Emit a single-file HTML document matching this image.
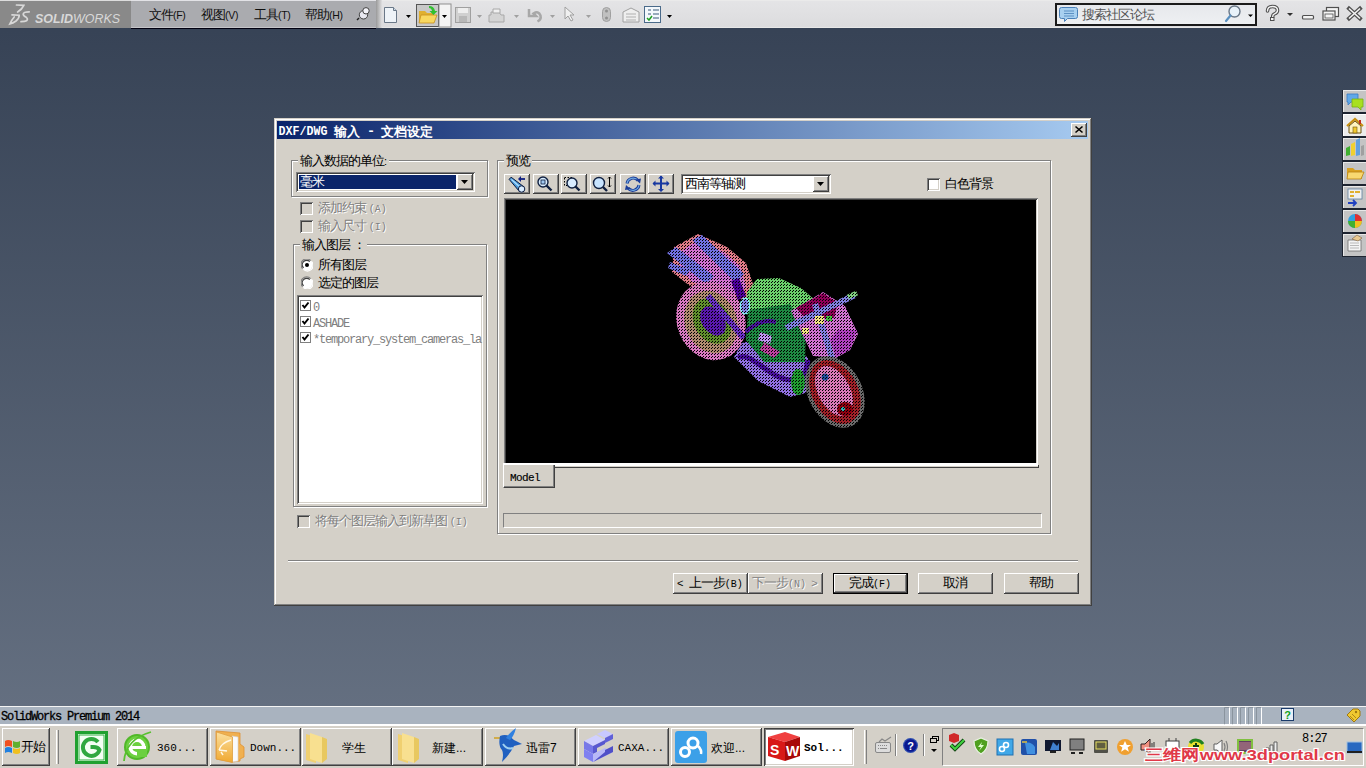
<!DOCTYPE html>
<html><head><meta charset="utf-8">
<style>
*{margin:0;padding:0;box-sizing:border-box}
html,body{width:1366px;height:768px;overflow:hidden}
body{position:relative;font-family:"Liberation Sans",sans-serif;font-size:12px;color:#000;
background:linear-gradient(to bottom,#354154 0px,#687384 768px)}
.a{position:absolute}
.raised{background:#d4d0c8;box-shadow:inset -1px -1px #404040,inset 1px 1px #fff,inset -2px -2px #808080,inset 2px 2px #d4d0c8}
.sunken{box-shadow:inset 1px 1px #808080,inset -1px -1px #fff,inset 2px 2px #404040,inset -2px -2px #d4d0c8}
.eg{border:1px solid #808080}
.ew{border:1px solid #fff}
.t{white-space:nowrap;line-height:13px;font-size:13px;letter-spacing:-1px}
.as{font-size:11px;letter-spacing:0}
.m10{font-family:"Liberation Mono",monospace;font-size:10px;letter-spacing:0}
.dis{color:#808080;text-shadow:1px 1px #fff}
.mono{font-family:"Liberation Mono",monospace}
</style></head><body>

<!-- ===== top bar ===== -->
<div class="a" style="left:0;top:0;width:1366px;height:28px;background:linear-gradient(to bottom,#e4e4e6,#dcdcde);border-top:1px solid #eaeaea;border-bottom:1px solid #e8e8e8"></div>
<div class="a" style="left:0;top:0;width:131px;height:28px;background:#898989;border-top:1px solid #dcdcdc"></div>
<div class="a" style="left:131px;top:0;width:245px;height:29px;background:#aaabaf;border-top:1px solid #e2e2e6;border-bottom:1px solid #000010;box-shadow:inset 0 -1px #c4c4c8"></div>
<div class="a" style="left:376px;top:0;width:6px;height:28px;background:linear-gradient(to right,#9a9a9a,#dfdfe1)"></div>
<svg class="a" style="left:0;top:0" width="131" height="28">
 <g fill="none" stroke="#d8d8d8" stroke-width="1.7" stroke-linecap="round">
  <path d="M16.5 5 L23.8 5.4 Q22 9.5 17.6 12"/>
  <path d="M12 14.8 L19.2 15.2 Q19.5 18 16 21 Q13 23.3 9.8 24 Q12 19.5 14.2 17"/>
  <path d="M29.2 11.8 Q23.5 11.8 23.2 14 Q23.2 16 26.3 17.3 Q28.4 19 26.5 20.8 Q25 21.7 21 21.7"/>
 </g>
 <text x="35" y="22.5" font-family="Liberation Sans" font-size="12.5" font-style="italic" fill="#d8d8d8" textLength="85" lengthAdjust="spacingAndGlyphs"><tspan font-weight="bold">SOLID</tspan>WORKS</text>
</svg>
<div class="a t" style="left:149px;top:8px;color:#101010">文件<span style="font-size:10.5px;letter-spacing:-0.3px">(F)</span></div>
<div class="a t" style="left:201px;top:8px;color:#101010">视图<span style="font-size:10.5px;letter-spacing:-0.3px">(V)</span></div>
<div class="a t" style="left:254px;top:8px;color:#101010">工具<span style="font-size:10.5px;letter-spacing:-0.3px">(T)</span></div>
<div class="a t" style="left:305px;top:8px;color:#101010">帮助<span style="font-size:10.5px;letter-spacing:-0.3px">(H)</span></div>
<svg class="a" style="left:352px;top:3px" width="22" height="22">
 <path d="M7 15 L5 17" stroke="#202020" stroke-width="1.4"/>
 <circle cx="11.5" cy="11.8" r="4.2" fill="#e8e8f0" stroke="#404040" stroke-width="1"/>
 <circle cx="14" cy="7.8" r="3.2" fill="#f4f4fa" stroke="#404040" stroke-width="1"/>
</svg>

<!-- toolbar icons -->
<svg class="a" style="left:377px;top:0" width="300" height="28">
 <!-- new -->
 <path d="M7.5 7.5h9l3 3v12h-12z" fill="#eef3f8" stroke="#6a7888"/>
 <path d="M16.5 7.5v3h3" fill="#d0dce8" stroke="#6a7888"/>
 <path d="M29 15h5l-2.5 3z" fill="#000"/>
 <!-- open pressed -->
 <rect x="39.5" y="4.5" width="22" height="22" fill="#c8c8c8" stroke="#555"/>
 <rect x="62" y="4" width="12" height="23" fill="#f4f4f4" stroke="#909090"/>
 <path d="M65 15h5l-2.5 3z" fill="#000"/>
 <path d="M42 11h6l2 2h7v10h-15z" fill="#e0b030"/>
 <path d="M44 15h16l-3 8h-15z" fill="#f8d860" stroke="#c89020" stroke-width=".8"/>
 <path d="M52 6 q5 0 6 5 h2.5l-4 4-4-4h2.5q-.5-3-3-3z" fill="#30c030"/>
 <!-- save disabled -->
 <rect x="78.5" y="7.5" width="15" height="15" fill="#d0d0d0" stroke="#a0a0a0"/>
 <rect x="81" y="8" width="10" height="5" fill="#eeeeee"/>
 <rect x="82" y="16" width="8" height="6" fill="#b8b8b8"/>
 <path d="M100 15h5l-2.5 3z" fill="#a0a0a0"/>
 <!-- print disabled -->
 <path d="M114 12h8l2 3h3v7h-15v-7h2z" fill="#d4d4d4" stroke="#a8a8a8"/>
 <path d="M116 9h7v4h-7z" fill="#f0f0f0" stroke="#a8a8a8"/>
 <path d="M137 15h5l-2.5 3z" fill="#a0a0a0"/>
 <!-- undo disabled -->
 <path d="M152 9v7h7l-2.5-2.5q5-3 7 2 q1 4-3 6" fill="none" stroke="#a8a8a8" stroke-width="2.5"/>
 <path d="M173 15h5l-2.5 3z" fill="#a0a0a0"/>
 <!-- select -->
 <path d="M188 7v12l3-3 3 5 2-1-3-5h4z" fill="#f0f0f0" stroke="#a0a0a0"/>
 <path d="M209 15h5l-2.5 3z" fill="#a0a0a0"/>
 <!-- slider -->
 <rect x="225.5" y="7.5" width="8" height="14" rx="4" fill="#c0c0c0" stroke="#a0a0a0"/>
 <circle cx="229.5" cy="11" r="1.5" fill="#909090"/><circle cx="229.5" cy="18" r="1.5" fill="#909090"/>
 <!-- options -->
 <path d="M246 12l8-4 8 4v10h-16z" fill="#eeeeee" stroke="#a0a0a0"/>
 <path d="M249 14h10M249 17h10M249 20h10" stroke="#b0b0b0"/>
 <!-- checklist -->
 <rect x="267.5" y="6.5" width="16" height="16" fill="#f4f8fc" stroke="#4a6a8a"/>
 <path d="M271 10h3M276 10h6M271 14h3M276 14h6M276 18h6" stroke="#3a5a7a"/>
 <path d="M270 18l2 2 3-4" fill="none" stroke="#20a020" stroke-width="1.5"/>
 <path d="M290 15h5l-2.5 3z" fill="#000"/>
</svg>

<!-- search box -->
<div class="a" style="left:1055px;top:3px;width:202px;height:23px;border:2px solid #1a1a1a;background:linear-gradient(to bottom,#e6e8ec,#eef0f2)"></div>
<svg class="a" style="left:1059px;top:5px" width="20" height="18">
 <path d="M2.5 2.5h14a2 2 0 0 1 2 2v7a2 2 0 0 1-2 2h-8l-3 3v-3h-3a2 2 0 0 1-2-2v-7a2 2 0 0 1 2-2z" fill="#a8d0f0" stroke="#4a80b8"/>
 <path d="M5 6h10M5 8.5h10M5 11h10" stroke="#4a80b8" stroke-width=".8"/>
</svg>
<div class="a t" style="left:1082px;top:8px;color:#505050">搜索社区论坛</div>
<svg class="a" style="left:1222px;top:4px" width="40" height="22">
 <circle cx="12.5" cy="7.5" r="5.5" fill="#e8f2fa" stroke="#6a7888" stroke-width="1.4"/>
 <path d="M8.5 11.5L4 17" stroke="#5a90c0" stroke-width="2.2" stroke-linecap="round"/>
 <path d="M26 10.5h5l-2.5 2.5z" fill="#000"/>
</svg>
<svg class="a" style="left:1262px;top:4px" width="104" height="22">
 <path d="M5.5 7q0-4.5 5-4.5t5 3.8q0 2.6-3 3.6q-1.8.6-1.8 2.8" fill="none" stroke="#505050" stroke-width="3.6" stroke-linecap="round"/>
 <path d="M5.5 7q0-4.5 5-4.5t5 3.8q0 2.6-3 3.6q-1.8.6-1.8 2.8" fill="none" stroke="#f4f4f4" stroke-width="1.4" stroke-linecap="round"/>
 <rect x="8.5" y="13.5" width="3.5" height="3" fill="#f4f4f4" stroke="#505050"/>
 <path d="M25 9h6l-3 3z" fill="#303030"/>
 <rect x="40.5" y="11.5" width="11" height="3.5" rx="1" fill="#f4f4f4" stroke="#505050" stroke-width="1.2"/>
 <rect x="64.5" y="3.5" width="12" height="9" fill="#f4f4f4" stroke="#505050" stroke-width="1.2"/>
 <rect x="61" y="7" width="12" height="9" fill="#f4f4f4" stroke="#505050" stroke-width="1.2"/>
 <rect x="63" y="10" width="8" height="4" fill="none" stroke="#505050" stroke-width=".8"/>
 <path d="M87 4.5l11 10M98 4.5l-11 10" stroke="#505050" stroke-width="3.8" stroke-linecap="square"/>
 <path d="M87 4.5l11 10M98 4.5l-11 10" stroke="#f4f4f4" stroke-width="1.6"/>
</svg>

<!-- ===== side tabs ===== -->
<div class="a" style="left:1342px;top:90px;width:24px;height:167px;background:#1e2430"></div>
<div class="a" style="left:1343px;top:90px;width:23px;height:22px;background:#c4c4c4;border-top:1px solid #e8e8e8;border-left:1px solid #e8e8e8"></div>
<div class="a" style="left:1343px;top:114px;width:23px;height:22px;background:#ececec;border-top:1px solid #fff;border-left:1px solid #fff"></div>
<div class="a" style="left:1343px;top:138px;width:23px;height:22px;background:#c4c4c4;border-top:1px solid #e8e8e8;border-left:1px solid #e8e8e8"></div>
<div class="a" style="left:1343px;top:162px;width:23px;height:22px;background:#c4c4c4;border-top:1px solid #e8e8e8;border-left:1px solid #e8e8e8"></div>
<div class="a" style="left:1343px;top:186px;width:23px;height:22px;background:#c4c4c4;border-top:1px solid #e8e8e8;border-left:1px solid #e8e8e8"></div>
<div class="a" style="left:1343px;top:210px;width:23px;height:22px;background:#c4c4c4;border-top:1px solid #e8e8e8;border-left:1px solid #e8e8e8"></div>
<div class="a" style="left:1343px;top:234px;width:23px;height:22px;background:#c4c4c4;border-top:1px solid #e8e8e8;border-left:1px solid #e8e8e8"></div>
<svg class="a" style="left:1343px;top:90px" width="23" height="167">
 <!-- chat -->
 <path d="M4 4h11v8h-7l-3 3v-3h-1z" fill="#60a8e8" stroke="#3a78c0" stroke-width=".8"/>
 <path d="M9 9h11v8h-2v3l-3-3h-6z" fill="#a8e020" stroke="#78b010" stroke-width=".8"/>
 <!-- house -->
 <path d="M4 36l8-7 8 7" fill="none" stroke="#c89010" stroke-width="2.2"/>
 <path d="M6 36v7h12v-7l-6-5z" fill="#fff4c0" stroke="#6a5010"/>
 <rect x="10" y="37" width="4" height="6" fill="#f0c830" stroke="#6a5010" stroke-width=".6"/>
 <rect x="16" y="30" width="2" height="4" fill="#c03020"/>
 <!-- chart -->
 <path d="M3 58l4-2v9l-4 1z" fill="#40b030"/>
 <path d="M8 54l4-2v13l-4 1z" fill="#f0d030"/>
 <path d="M13 50l4-2v17l-4 1z" fill="#60a0e0"/>
 <path d="M18 56l3-1v10l-3 1z" fill="#a0a0a0"/>
 <!-- folder -->
 <path d="M4 78h6l2 2h7v9h-15z" fill="#d8a020"/>
 <path d="M5 82h16l-3 7h-14z" fill="#f8d870" stroke="#b88010" stroke-width=".8"/>
 <!-- layout -->
 <rect x="5" y="99" width="14" height="10" fill="#f0f0f0" stroke="#6080a0" stroke-width=".8"/>
 <path d="M7 101h4v2h-4zM12 101h5v2h-5zM7 105h4v2h-4z" fill="#e0b030"/>
 <path d="M5 113h8M10 110l3 3-3 3" fill="none" stroke="#2040c0" stroke-width="1.8"/>
 <!-- ball -->
 <circle cx="12" cy="131" r="7" fill="#30a0e0"/>
 <path d="M12 124a7 7 0 0 1 7 7h-7z" fill="#e03030"/>
 <path d="M5 131a7 7 0 0 0 7 7v-7z" fill="#40b030"/>
 <path d="M12 138a7 7 0 0 0 7-7h-7z" fill="#f0c020"/>
 <!-- note -->
 <path d="M5 150h13v11h-13z" fill="#f4f4f4" stroke="#707070" stroke-width=".8"/>
 <path d="M7 153h9M7 155.5h9M7 158h9" stroke="#909090" stroke-width=".6"/>
 <path d="M9 149l5-4 5 3-4 3z" fill="#e8c890" stroke="#806040" stroke-width=".6"/>
</svg>

<!-- ===== dialog ===== -->
<div class="a" style="left:274px;top:118px;width:818px;height:488px;background:#d4d0c8;box-shadow:inset -1px -1px #404040,inset 1px 1px #d4d0c8,inset -2px -2px #808080,inset 2px 2px #fff"></div>
<div class="a" style="left:277px;top:121px;width:811px;height:18px;background:linear-gradient(to right,#0a246a,#a6caf0)"></div>
<svg class="a" style="left:277px;top:121px" width="200" height="18" font-family="Liberation Mono" font-weight="bold" fill="#fff">
 <text x="1.5" y="14" font-size="13.5" textLength="49" lengthAdjust="spacingAndGlyphs">DXF/DWG</text>
 <text x="57" y="14.5" font-size="13" font-family="Liberation Sans" letter-spacing="0">输入</text>
 <text x="90" y="14" font-size="13.5">-</text>
 <text x="104" y="14.5" font-size="13" font-family="Liberation Sans">文档设定</text>
</svg>
<div class="a raised" style="left:1071px;top:123px;width:16px;height:14px"></div>
<svg class="a" style="left:1071px;top:123px" width="16" height="14"><path d="M4.5 3.5L11.5 9.5M11.5 3.5L4.5 9.5" stroke="#000" stroke-width="1.6"/></svg>

<!-- group 1 -->
<div class="a ew" style="left:292px;top:161px;width:197px;height:37px"></div>
<div class="a eg" style="left:291px;top:160px;width:197px;height:37px"></div>
<div class="a t" style="left:298px;top:154px;padding:0 2px;background:#d4d0c8">输入数据的单位<span class="as">:</span></div>
<div class="a sunken" style="left:296px;top:172px;width:179px;height:20px;background:#fff"></div>
<div class="a" style="left:299px;top:175px;width:157px;height:14px;background:#0a246a"></div>
<div class="a t" style="left:300px;top:175px;color:#fff">毫米</div>
<div class="a raised" style="left:457px;top:174px;width:16px;height:16px"></div>
<svg class="a" style="left:457px;top:174px" width="16" height="16"><path d="M4 6h7l-3.5 4z" fill="#000"/></svg>

<!-- checkboxes disabled -->
<div class="a sunken" style="left:300px;top:202px;width:13px;height:13px"></div>
<div class="a t dis" style="left:318px;top:201px">添加约束 <span class="m10">(A)</span></div>
<div class="a sunken" style="left:300px;top:220px;width:13px;height:13px"></div>
<div class="a t dis" style="left:318px;top:219px">输入尺寸 <span class="m10">(I)</span></div>

<!-- group 2 -->
<div class="a ew" style="left:294px;top:245px;width:194px;height:263px"></div>
<div class="a eg" style="left:293px;top:244px;width:194px;height:263px"></div>
<div class="a t" style="left:300px;top:238px;padding:0 2px;background:#d4d0c8">输入图层 ：</div>

<svg class="a" style="left:301px;top:259px" width="12" height="30">
 <g id="rb">
 <circle cx="6" cy="6" r="5.5" fill="#fff"/>
 <path d="M1.6 9.6A5.4 5.4 0 0 1 9.6 1.6" fill="none" stroke="#808080" stroke-width="1.3"/>
 <path d="M2.6 8.8A4.3 4.3 0 0 1 8.8 2.6" fill="none" stroke="#404040" stroke-width="1.2"/>
 <path d="M10.4 2.4A5.4 5.4 0 0 1 2.4 10.4" fill="none" stroke="#fff" stroke-width="1.2"/>
 </g>
 <circle cx="6" cy="6" r="2" fill="#000"/>
 <use href="#rb" y="18"/>
</svg>
<div class="a t" style="left:318px;top:258px">所有图层</div>
<div class="a t" style="left:318px;top:276px">选定的图层</div>

<div class="a sunken" style="left:297px;top:295px;width:186px;height:209px;background:#fff"></div>
<svg class="a" style="left:300px;top:300px" width="11" height="43">
 <g id="cb"><rect x="0.5" y="0.5" width="10" height="10" fill="#fff" stroke="#808080"/><path d="M2.5 5l2 2.5 4-5" fill="none" stroke="#000" stroke-width="2"/></g>
 <use href="#cb" y="16"/><use href="#cb" y="32"/>
</svg>
<div class="a t mono" style="left:313px;top:300px;color:#808080;font-size:12px;letter-spacing:-1.2px;line-height:16px">0<br>ASHADE<br>*temporary_system_cameras_la</div>

<div class="a sunken" style="left:297px;top:515px;width:13px;height:13px"></div>
<div class="a t dis" style="left:315px;top:514px">将每个图层输入到新草图 <span class="m10">(I)</span></div>

<!-- group 3 preview -->
<div class="a ew" style="left:498px;top:161px;width:554px;height:374px"></div>
<div class="a eg" style="left:497px;top:160px;width:554px;height:374px"></div>
<div class="a t" style="left:504px;top:154px;padding:0 2px;background:#d4d0c8">预览</div>

<div class="a raised" style="left:504px;top:174px;width:26px;height:20px"></div>
<div class="a raised" style="left:533px;top:174px;width:26px;height:20px"></div>
<div class="a raised" style="left:561px;top:174px;width:26px;height:20px"></div>
<div class="a raised" style="left:590px;top:174px;width:26px;height:20px"></div>
<div class="a raised" style="left:620px;top:174px;width:26px;height:20px"></div>
<div class="a raised" style="left:648px;top:174px;width:26px;height:20px"></div>

<svg class="a" style="left:504px;top:174px" width="170" height="20">
 <!-- 1 telescope -->
 <g transform="translate(0,0)">
 <path d="M7.1 3.2L19.6 12.6 15.2 17.2 5.1 5.3z" fill="#4a98d8" stroke="#0a1a40" stroke-width="1"/>
 <path d="M7.5 5.5L17 14" stroke="#b0e0ff" stroke-width="1.2"/>
 <circle cx="17.6" cy="15" r="3.2" fill="#d8ecff" stroke="#0a1a40" stroke-width="1"/>
 <path d="M21 5h-5.5" stroke="#102080" stroke-width="1.8"/>
 <path d="M14 5l3-3v6z" fill="#102080"/>
 </g>
 <!-- 2 zoom fit -->
 <g transform="translate(29,0)">
 <circle cx="10" cy="8" r="5" fill="#d8ecff" stroke="#102040" stroke-width="1.4"/>
 <rect x="8" y="6" width="4" height="4" fill="#a0c8f0" stroke="#102040" stroke-width=".8"/>
 <path d="M13.5 11.5l5 5" stroke="#102040" stroke-width="2.4"/>
 </g>
 <!-- 3 zoom box -->
 <g transform="translate(57,0)">
 <rect x="3.5" y="3.5" width="8" height="8" fill="none" stroke="#000" stroke-dasharray="1.5 1.5"/>
 <circle cx="11" cy="9" r="5" fill="#d8ecff" stroke="#102040" stroke-width="1.4"/>
 <path d="M14.5 12.5l4 4" stroke="#102040" stroke-width="2.4"/>
 </g>
 <!-- 4 zoom in/out -->
 <g transform="translate(86,0)">
 <circle cx="9" cy="9" r="5.5" fill="#c8e4ff" stroke="#102040" stroke-width="1.4"/>
 <path d="M13 13l4 4" stroke="#102040" stroke-width="2.4"/>
 <path d="M19.5 3v10M18 4.5l1.5-1.5 1.5 1.5M18 11.5l1.5 1.5 1.5-1.5" fill="none" stroke="#000" stroke-width="1"/>
 </g>
 <!-- 5 rotate -->
 <g transform="translate(116,0)">
 <path d="M7 9.5A6.2 6.2 0 0 1 18 6.5" fill="none" stroke="#1a3c98" stroke-width="3"/>
 <path d="M7 9.5A6.2 6.2 0 0 1 18 6.5" fill="none" stroke="#70a8e0" stroke-width="1.2"/>
 <path d="M19 11A6.2 6.2 0 0 1 8 14" fill="none" stroke="#1a3c98" stroke-width="3"/>
 <path d="M19 11A6.2 6.2 0 0 1 8 14" fill="none" stroke="#70a8e0" stroke-width="1.2"/>
 <path d="M15.5 5.5l5.5-1-1 5z" fill="#1a3c98"/><path d="M10.5 15l-5.5 1 1-5z" fill="#1a3c98"/>
 </g>
 <!-- 6 pan -->
 <g transform="translate(144,0)">
 <path d="M13 2v15M5.5 9.5h15" stroke="#1838a0" stroke-width="2"/>
 <path d="M13 1.5l-3 3h6zM13 18l-3-3h6zM4.5 9.5l3-3v6zM21.5 9.5l-3-3v6z" fill="#1838a0"/>
 </g>
</svg>

<div class="a sunken" style="left:681px;top:174px;width:150px;height:20px;background:#fff"></div>
<div class="a t" style="left:685px;top:177px">西南等轴测</div>
<div class="a raised" style="left:813px;top:176px;width:16px;height:16px"></div>
<svg class="a" style="left:813px;top:176px" width="16" height="16"><path d="M4 6h7l-3.5 4z" fill="#000"/></svg>

<div class="a sunken" style="left:927px;top:178px;width:13px;height:13px;background:#fff"></div>
<div class="a t" style="left:945px;top:177px">白色背景</div>

<div class="a sunken" style="left:504px;top:198px;width:534px;height:267px;background:#000"></div>
<svg class="a" style="left:506px;top:200px" width="530" height="263" viewBox="506 200 530 263">
<defs>
<pattern id="dots" width="3" height="3" patternUnits="userSpaceOnUse"><rect x="0" y="0" width="1" height="1" fill="#000"/><rect x="1" y="2" width="1" height="1" fill="#000"/></pattern>
</defs>
<!-- rear body -->
<polygon points="674,247 698,234 727,247 746,263 753,284 746,300 690,286 672,272" fill="#e07a86"/>
<polygon points="680,252 698,240 724,252 740,266 746,286 739,296 692,282 680,268" fill="#d070d0"/>
<polygon points="667,253 676,247 714,276 706,284" fill="#7070e0"/>
<polygon points="692,240 702,235 744,274 736,283" fill="#7070e0"/>
<polygon points="670,262 690,270 686,276 668,268" fill="#7070e0"/>
<polygon points="731,281 739,278 746,296 738,300" fill="#5000a0"/>
<!-- rear wheel -->
<ellipse cx="711" cy="321" rx="34" ry="40" transform="rotate(-22 711 321)" fill="#d878c0"/>
<ellipse cx="711" cy="322" rx="26" ry="32" transform="rotate(-22 711 322)" fill="#b08a70"/>
<ellipse cx="712" cy="321" rx="18" ry="24" transform="rotate(-28 712 321)" fill="#60902c"/>
<ellipse cx="713" cy="321" rx="11" ry="16" transform="rotate(-35 713 321)" fill="#5a18b0"/>
<path d="M708 296 L744 338" stroke="#6a30c8" stroke-width="6"/>
<!-- tank -->
<polygon points="747,292 757,279 779,278 801,288 815,300 808,318 790,332 758,330 746,312" fill="#6ad06a"/>
<!-- lower body -->
<polygon points="734,357 742,343 782,334 808,358 806,393 790,397 758,381" fill="#9070e0"/>
<!-- engine mesh -->
<polygon points="748,310 790,304 806,330 805,362 764,362 746,340" fill="#1e8a42"/>
<polygon points="764,342 780,352 774,358 760,350" fill="#c040a0"/>
<polygon points="760,332 772,336 770,344 758,340" fill="#c090f0"/>
<ellipse cx="745" cy="306" rx="4.5" ry="8" fill="#8080e0" stroke="#80f0f0" stroke-width="1.5"/>
<!-- exhaust -->
<path d="M738 358 C 750 350, 768 378, 790 380 L 805 374 L 808 360" fill="none" stroke="#4a10a0" stroke-width="5"/>
<path d="M746 332 Q 760 318 776 322" fill="none" stroke="#4a10a0" stroke-width="4"/>
<!-- fairing -->
<polygon points="791,311 823,292 845,306 858,334 850,350 836,358 813,356" fill="#d070d0"/>
<polygon points="796,308 823,293 838,303 834,318 805,318" fill="#900058"/>
<polygon points="838,330 857,330 850,350 836,357 830,340" fill="#b040c0"/>
<path d="M786 328 L855 295" stroke="#8080e0" stroke-width="6"/>
<path d="M848 297 L857 293" stroke="#80d080" stroke-width="5"/>
<path d="M815 304 L832 358" stroke="#8080e0" stroke-width="6"/>
<rect x="815" y="316" width="9" height="8" fill="#f0e080"/>
<rect x="802" y="328" width="7" height="6" fill="#f0e080"/>
<rect x="826" y="316" width="6" height="5" fill="#40c040"/>
<!-- green fender -->
<ellipse cx="798" cy="382" rx="7" ry="13" fill="#20a030"/>
<!-- front wheel -->
<ellipse cx="835" cy="392" rx="27" ry="38" transform="rotate(-28 835 392)" fill="#6a6a6a"/>
<ellipse cx="835" cy="392" rx="23" ry="34" transform="rotate(-28 835 392)" fill="#a02028"/>
<ellipse cx="834" cy="391" rx="16" ry="27" transform="rotate(-28 834 391)" fill="#d878b8"/>
<ellipse cx="845" cy="409" rx="8" ry="7" fill="#900010"/>
<circle cx="825" cy="377" r="3.5" fill="#2050a0"/>
<circle cx="843" cy="409" r="2" fill="#20c0c0"/>
<rect x="506" y="200" width="530" height="263" fill="url(#dots)"/>
</svg>



<!-- tab strip -->
<div class="a" style="left:503px;top:463px;width:535px;height:3px;background:#fff"></div>
<div class="a" style="left:554px;top:467px;width:485px;height:1px;background:#404040"></div>
<div class="a" style="left:1038px;top:465px;width:1px;height:3px;background:#404040"></div>
<div class="a" style="left:503px;top:465px;width:52px;height:23px;background:#d4d0c8;border-left:1px solid #fff;border-right:1px solid #404040;border-bottom:1px solid #404040;box-shadow:inset -1px -1px #808080"></div>
<div class="a t mono" style="left:510px;top:472px;font-size:11px;letter-spacing:-0.6px;-webkit-text-stroke:0.15px #000">Model</div>

<div class="a" style="left:503px;top:513px;width:539px;height:15px;border-top:1px solid #808080;border-left:1px solid #808080;border-bottom:1px solid #fff;border-right:1px solid #fff"></div>

<!-- separator -->
<div class="a" style="left:288px;top:560px;width:790px;height:2px;border-top:1px solid #808080;border-bottom:1px solid #fff"></div>

<!-- buttons -->
<div class="a raised" style="left:673px;top:573px;width:75px;height:21px"></div>
<div class="a t" style="left:677px;top:576px"><span class="as">&lt;</span>&nbsp; 上一步<span class="m10">(B)</span></div>
<div class="a raised" style="left:748px;top:573px;width:75px;height:21px"></div>
<div class="a t dis" style="left:752px;top:576px">下一步<span class="m10">(N)</span>&nbsp; <span class="as">&gt;</span></div>
<div class="a" style="left:833px;top:573px;width:75px;height:21px;background:#000;padding:1px"><div class="raised" style="width:73px;height:19px"></div></div>
<div class="a t" style="left:849px;top:576px">完成<span class="m10">(F)</span></div>
<div class="a raised" style="left:918px;top:573px;width:75px;height:21px"></div>
<div class="a t" style="left:943px;top:576px">取消</div>
<div class="a raised" style="left:1004px;top:573px;width:75px;height:21px"></div>
<div class="a t" style="left:1029px;top:576px">帮助</div>

<!-- ===== status bar ===== -->
<div class="a" style="left:0;top:706px;width:1366px;height:20px;background:#a9b3bf;border-top:1px solid #f4f4f4;border-bottom:2px solid #fff"></div>
<div class="a t mono" style="left:1px;top:711px;font-size:12px;line-height:12px;color:#000;letter-spacing:-1.2px;-webkit-text-stroke:0.3px #000">SolidWorks Premium 2014</div>
<svg class="a" style="left:1222px;top:706px" width="144" height="20">
 <g fill="none" stroke-width="1">
 <path d="M2.5 18.5v-17h5" stroke="#8a949e"/><path d="M2.5 18.5h5v-17" stroke="#fff"/>
 <path d="M10.5 18.5v-17h5" stroke="#8a949e"/><path d="M10.5 18.5h5v-17" stroke="#fff"/>
 <path d="M18.5 18.5v-17h5" stroke="#8a949e"/><path d="M18.5 18.5h5v-17" stroke="#fff"/>
 <path d="M26.5 18.5v-17h5" stroke="#8a949e"/><path d="M26.5 18.5h5v-17" stroke="#fff"/>
 <path d="M34.5 18.5v-17h5" stroke="#8a949e"/><path d="M34.5 18.5h5v-17" stroke="#fff"/>
 </g>
 <rect x="59.5" y="2.5" width="12" height="12" fill="#e8f0f8" stroke="#1a3a6a"/>
 <text x="65.5" y="12.5" font-family="Liberation Sans" font-size="11" font-weight="bold" fill="#10a020" text-anchor="middle">?</text>
 <path d="M125 9l6-6h5l2 2v5l-6 6z" fill="#f0c830" stroke="#a07810"/>
 <circle cx="134" cy="6" r="1.2" fill="#a07810"/>
 <path d="M128 10l4 4M130 8l4 4" stroke="#a07810" stroke-width=".8"/>
</svg>

<!-- ===== taskbar ===== -->
<div class="a" style="left:0;top:726px;width:1366px;height:42px;background:#d4d0c8"></div>
<div class="a raised" style="left:2px;top:728px;width:48px;height:38px"></div>
<svg class="a" style="left:4px;top:738px" width="17" height="16">
 <path d="M1 3q3-2 7 0v6q-4-2-7 0z" fill="#f05020"/>
 <path d="M9 3q4 2 7 0v6q-3 2-7 0z" fill="#60b030"/>
 <path d="M1 10q3-2 7 0v5q-4-2-7 0z" fill="#2080e0"/>
 <path d="M9 10q4 2 7 0v5q-3 2-7 0z" fill="#f0c020"/>
</svg>
<div class="a t" style="left:21px;top:740px">开始</div>
<div class="a" style="left:56px;top:730px;width:3px;height:34px;border-left:1px solid #fff;border-right:1px solid #808080"></div>
<svg class="a" style="left:75px;top:731px" width="33" height="33">
 <rect x="0" y="0" width="33" height="33" fill="#20a030"/>
 <rect x="3" y="3" width="27" height="27" fill="#f4fff4"/>
 <rect x="4" y="4" width="25" height="25" fill="none" stroke="#30b040" stroke-width="1"/>
 <path d="M23 11a8.5 8.5 0 1 0 1.5 8 q-1.5-3-6-3 h-3" fill="none" stroke="#30a840" stroke-width="4"/>
</svg>

<div class="a raised" style="left:117px;top:728px;width:91px;height:38px"></div>
<div class="a raised" style="left:210px;top:728px;width:91px;height:38px"></div>
<div class="a raised" style="left:302px;top:728px;width:90px;height:38px"></div>
<div class="a raised" style="left:392px;top:728px;width:91px;height:38px"></div>
<div class="a raised" style="left:485px;top:728px;width:91px;height:38px"></div>
<div class="a raised" style="left:578px;top:728px;width:91px;height:38px"></div>
<div class="a raised" style="left:671px;top:728px;width:91px;height:38px"></div>
<div class="a" style="left:764px;top:728px;width:90px;height:38px;background:#fff;box-shadow:inset 1px 1px #404040,inset -1px -1px #fff,inset 2px 2px #808080,inset -2px -2px #d4d0c8"></div>

<svg class="a" style="left:0;top:728px" width="870" height="38">
 <!-- 360 -->
 <circle cx="137" cy="19" r="13" fill="#50b828"/>
 <circle cx="137" cy="19" r="11" fill="#6cd040"/>
 <circle cx="137" cy="19" r="8.5" fill="#fff"/>
 <circle cx="137" cy="19" r="5" fill="#6cd040"/>
 <rect x="128" y="18" width="18" height="3" fill="#fff"/>
 <path d="M137 21h10v8h-10z" fill="#6cd040"/>
 <path d="M137 21h9a8.5 8.5 0 0 1-9 6.5z" fill="#fff" opacity="0"/>
 <path d="M124 33q2-22 27-29" fill="none" stroke="#58c030" stroke-width="1.8"/>
 <text x="157" y="23" font-family="Liberation Mono" font-size="11" fill="#000">360...</text>
 <!-- Down folder -->
 <defs><linearGradient id="fg" x1="0" y1="0" x2="0" y2="1"><stop offset="0" stop-color="#fbe0a0"/><stop offset="1" stop-color="#f0a830"/></linearGradient></defs>
 <path d="M216 3L240 5V16L244 19V29L240 31V33L232 34L216 31Z" fill="#f0b050" stroke="#e09030" stroke-width=".8"/>
 <path d="M232 8L238 9V33L232 34Z" fill="#fafafa" stroke="#d0d0d0" stroke-width=".6"/>
 <path d="M216.5 4L232.5 9V34.5L216.5 31Z" fill="url(#fg)" stroke="#e0a040" stroke-width=".8"/>
 <path d="M219 22Q221 15 231 12M219 22L227 23M221 24l2 3" fill="none" stroke="#fff8e8" stroke-width="1.4"/>
 <text x="250" y="23" font-family="Liberation Mono" font-size="11" fill="#000">Down...</text>
 <!-- 学生 folder -->
 <path d="M306 6l10 3v26l-10-3z" fill="#f0d070"/>
 <path d="M310 5l12 4v26l-12-4z" fill="#f8e090"/>
 <path d="M322 9l5 2v20l-5 4z" fill="#e8c860"/>
 <text x="342" y="24" font-family="Liberation Sans" font-size="12" fill="#000">学生</text>
 <!-- 新建 folder -->
 <path d="M398 6l10 3v26l-10-3z" fill="#f0d070"/>
 <path d="M402 5l12 4v26l-12-4z" fill="#f8e090"/>
 <path d="M414 9l5 2v20l-5 4z" fill="#e8c860"/>
 <text x="432" y="24" font-family="Liberation Sans" font-size="12" fill="#000">新建...</text>
 <!-- 迅雷 bird -->
 <path d="M494 10h8" stroke="#d0a020" stroke-width="1.5"/>
 <path d="M500 8q8-3 14 4l8 4-8 2q-4 8-12 16 q2-8 0-12q-4-4-2-14z" fill="#2060c0"/>
 <path d="M506 10q4-6 10-10q-2 8-6 12z" fill="#3080e0"/>
 <path d="M503 16q4 6 10 4" fill="none" stroke="#a0d0f0" stroke-width="2"/>
 <text x="526" y="24" font-family="Liberation Sans" font-size="12" fill="#000">迅雷7</text>
 <!-- CAXA -->
 <path d="M584 13l12-6 9 5-12 6z" fill="#d0d0ff"/>
 <path d="M584 13v8l9 5v-8z" fill="#7878e8"/>
 <path d="M593 18l12-6v4l-8 4v4l-4 2z" fill="#5858d0"/>
 <path d="M597 6l8-4 8 4-8 4z" fill="#c8c8ff"/>
 <path d="M605 10l8-4v5l-8 4z" fill="#6060d8"/>
 <path d="M584 21l9 5 12-6 8 4-20 10-9-5z" fill="#b8b8f8"/>
 <path d="M584 21v8l9 5v-8z" fill="#8080f0"/>
 <path d="M593 34l20-10v-6l-8 4v2z" fill="#5050c8"/>
 <text x="618" y="23" font-family="Liberation Mono" font-size="11" fill="#000">CAXA...</text>
 <!-- baidu -->
 <rect x="675" y="3" width="32" height="32" rx="3" fill="#3ca0e8"/>
 <circle cx="685" cy="24" r="4.5" fill="none" stroke="#fff" stroke-width="3"/>
 <circle cx="693" cy="15" r="5" fill="none" stroke="#fff" stroke-width="3"/>
 <path d="M698 18q4 4 3 8" fill="none" stroke="#fff" stroke-width="2.5"/>
 <text x="711" y="24" font-family="Liberation Sans" font-size="12" fill="#000">欢迎...</text>
 <!-- SW -->
 <path d="M768 9l17-5 15 5-15 5z" fill="#f04040"/>
 <path d="M768 9v19l17 5v-19z" fill="#d81818"/>
 <path d="M785 14l15-5v19l-15 5z" fill="#a80808"/>
 <text x="770" y="27" font-family="Liberation Sans" font-size="14" font-weight="bold" fill="#fff">S</text>
 <text x="786" y="28" font-family="Liberation Sans" font-size="14" font-weight="bold" fill="#fff">W</text>
 <text x="804" y="23" font-family="Liberation Mono" font-size="11" font-weight="bold" fill="#000">Sol...</text>
</svg>

<div class="a" style="left:864px;top:730px;width:3px;height:34px;border-left:1px solid #fff;border-right:1px solid #808080"></div>
<svg class="a" style="left:870px;top:728px" width="72" height="38">
 <rect x="5.5" y="14.5" width="15" height="10" rx="1.5" fill="#dcdcdc" stroke="#888"/>
 <path d="M8 17.5h1M10 17.5h1M12 17.5h1M14 17.5h1M16 17.5h1M8 20.5h1M10 20.5h7" stroke="#888" stroke-width="1.2"/>
 <path d="M9 14l3-3 3 2 3-2 3-2" fill="none" stroke="#888" stroke-width="1.2"/>
 <path d="M25.5 6v22" stroke="#808080"/><path d="M26.5 6v22" stroke="#fff"/>
 <circle cx="40.5" cy="17.5" r="7.5" fill="#3050b0"/>
 <circle cx="40.5" cy="17.5" r="6.3" fill="#0a1890"/>
 <text x="40.5" y="22" font-family="Liberation Sans" font-size="11" font-weight="bold" fill="#fff" text-anchor="middle">?</text>
 <path d="M53.5 6v22" stroke="#808080"/><path d="M54.5 6v22" stroke="#fff"/>
 <rect x="62.5" y="8.5" width="6" height="4" fill="none" stroke="#000"/>
 <rect x="60.5" y="10.5" width="6" height="4" fill="#d4d0c8" stroke="#000"/>
 <path d="M61 21h6l-3 3z" fill="#000"/>
</svg>

<!-- tray -->
<div class="a" style="left:942px;top:728px;width:422px;height:38px;border-left:1px solid #808080;border-top:1px solid #808080;border-right:1px solid #fff;border-bottom:1px solid #fff"></div>
<svg class="a" style="left:942px;top:728px" width="424" height="38">
 <!-- sw check -->
 <path d="M7 7l5-2 5 2v6l-5 2-5-2z" fill="#d02828"/>
 <path d="M9 17l4 4 9-9" fill="none" stroke="#104010" stroke-width="4"/>
 <path d="M9 17l4 4 9-9" fill="none" stroke="#40d040" stroke-width="2.2"/>
 <!-- shield -->
 <path d="M32 13l7-3 7 3q0 9-7 13q-7-4-7-13z" fill="#50a020" stroke="#e8f0e0" stroke-width="1.2"/>
 <path d="M40 14l-4 5h3l-2 4 5-6h-3z" fill="#e0ffd0"/>
 <!-- baidu -->
 <rect x="55" y="11" width="16" height="16" fill="#40a8e8" stroke="#2070b0"/>
 <circle cx="60" cy="21" r="2.5" fill="none" stroke="#fff" stroke-width="1.6"/>
 <circle cx="64" cy="17" r="2.5" fill="none" stroke="#fff" stroke-width="1.6"/>
 <!-- bird -->
 <rect x="79" y="11" width="16" height="16" rx="2" fill="#2050a8"/>
 <path d="M83 15q6-2 10 4v7h-8z" fill="#4090e0"/>
 <path d="M80 14h5" stroke="#e0c040" stroke-width="1.5"/>
 <!-- monitor dark -->
 <rect x="103" y="12" width="16" height="11" fill="#101830"/>
 <path d="M108 22l3-8 4 4 2-3v7z" fill="#4080d0"/>
 <rect x="108" y="23" width="6" height="2" fill="#202020"/>
 <!-- gray monitor -->
 <rect x="128" y="11" width="14" height="11" fill="#808080" stroke="#202020"/>
 <rect x="129" y="24" width="4" height="2" fill="#202020"/><rect x="137" y="24" width="4" height="2" fill="#202020"/>
 <!-- yellow monitor -->
 <rect x="152" y="12" width="14" height="13" rx="1" fill="#505048"/>
 <rect x="154" y="14" width="10" height="7" fill="#605e40" stroke="#e8e060"/>
 <!-- orange star -->
 <circle cx="183" cy="19" r="8" fill="#f0a030"/>
 <path d="M183 13l1.8 4h4.2l-3.4 2.6 1.3 4.2-3.9-2.6-3.9 2.6 1.3-4.2-3.4-2.6h4.2z" fill="#fff"/>
 <!-- red speaker -->
 <path d="M199 16h4l5-5v15l-5-4h-4z" fill="#f09080" stroke="#302020"/>
 <path d="M210 15v6M212 14v8" stroke="#303030"/>
 <!-- plug -->
 <rect x="224" y="13" width="13" height="11" fill="#fff" stroke="#404040"/>
 <path d="M227 13v-3M234 13v-3" stroke="#404040"/>
 <!-- yellow circle -->
 <circle cx="254" cy="19" r="8" fill="#e8e030"/>
 <path d="M248 15a8 8 0 0 1 13 1" fill="none" stroke="#208020" stroke-width="3"/>
 <path d="M254 15v7M251 18h6" stroke="#104010" stroke-width="2"/>
 <!-- speaker -->
 <path d="M272 16h3l5-4v14l-5-4h-3z" fill="#f8f8f8" stroke="#606060"/>
 <path d="M282 15q2 4 0 8M284 13q3 6 0 12" fill="none" stroke="#808080" stroke-width="1.2"/>
 <!-- grid -->
 <rect x="295" y="11" width="16" height="15" fill="#80c040"/>
 <rect x="297" y="13" width="12" height="11" fill="#604060"/>
 <path d="M297 15h12M297 17h12M297 19h12M297 21h12" stroke="#e0a0a0" stroke-width=".8"/>
 <!-- signal -->
 <path d="M320 26h3v-3h-3zM324 26h3v-6h-3zM328 26h3v-9h-3zM332 26h3v-12h-3z" fill="#f0f0f0" stroke="#606060" stroke-width="1"/>
 <!-- desktop -->
 <rect x="405" y="14" width="15" height="11" fill="#2868c0" stroke="#a0c0e0"/>
 <rect x="405" y="23" width="15" height="2" fill="#202020"/>
</svg>
<div class="a t mono" style="left:1302px;top:733px;font-size:12px;letter-spacing:-1px;line-height:12px">8:27</div>
<svg class="a" style="left:1140px;top:742px" width="212" height="24">
 <text x="5" y="18" font-family="Liberation Sans" font-size="15" font-weight="bold" fill="#e03848" stroke="#fff" stroke-width="2.2" paint-order="stroke" textLength="200" lengthAdjust="spacingAndGlyphs">三维网www.3dportal.cn</text>
</svg>

</body></html>
